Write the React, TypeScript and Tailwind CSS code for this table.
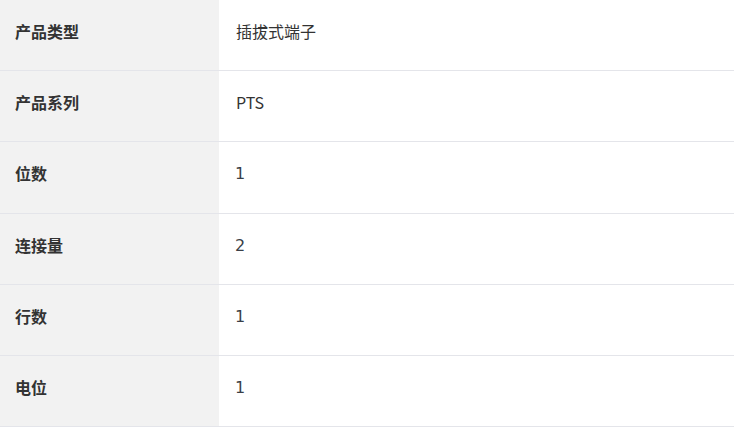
const rows: [string, string][] = [
  ["产品类型", "插拔式端子"],
  ["产品系列", "PTS"],
  ["位数", "1"],
  ["连接量", "2"],
  ["行数", "1"],
  ["电位", "1"],
];

export default function App() {
  return (
    <div
      className="w-[734px] bg-white text-[#333]"
      style={{ fontFamily: '"Noto Sans CJK SC", "Noto Sans", sans-serif' }}
    >
      {rows.map(([label, value]) => {
        const numeric = /^\d+$/.test(value);
        return (
          <div key={label} className="flex h-[71.2px] border-b border-[#e4e5ea]">
            <div className="w-[219px] shrink-0 bg-[#f2f2f2] pl-[15px] pt-[19px] text-[16px] leading-6 font-bold">
              {label}
            </div>
            <div
              className={
                numeric
                  ? "flex-1 pl-[16px] pt-[20px] text-[16px] leading-6 font-['DejaVu_Sans'] text-[#3a3f47]"
                  : "flex-1 pl-[17px] pt-[19px] text-[16px] leading-6"
              }
            >
              {value}
            </div>
          </div>
        );
      })}
    </div>
  );
}
